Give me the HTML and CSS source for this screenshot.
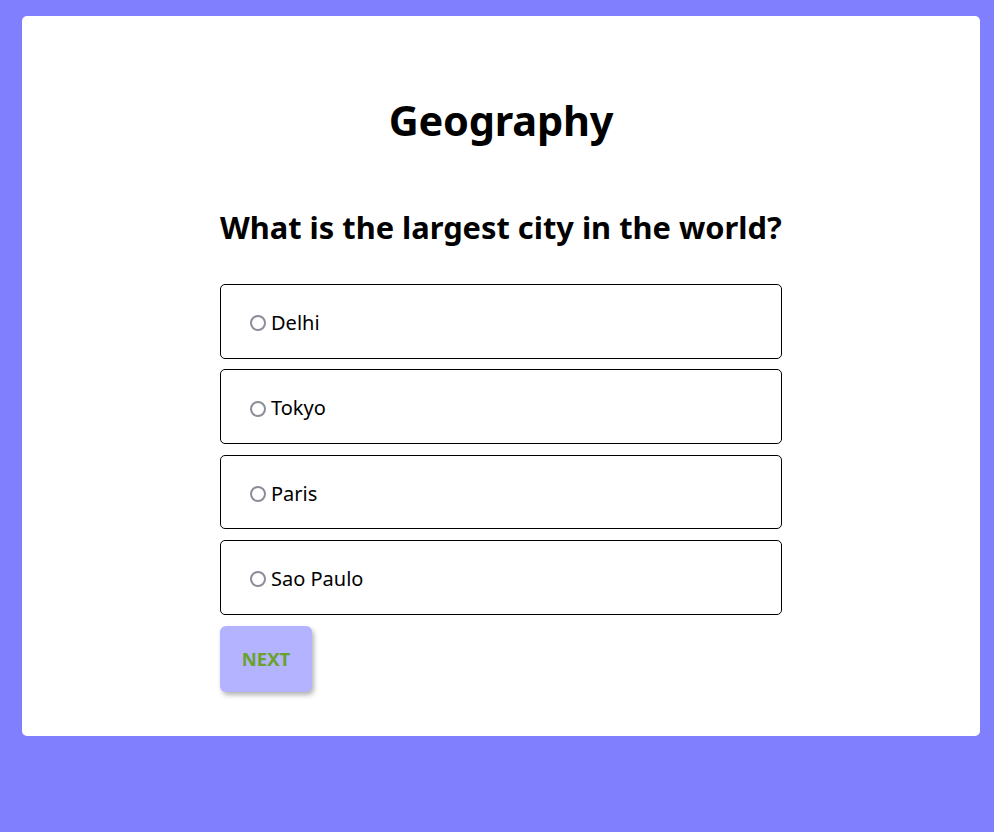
FILE: index.html
```html
<!DOCTYPE html>
<html>
<head>
<meta charset="utf-8">
<title>Quiz</title>
<link rel="stylesheet" href="styles.css">
</head>
<body>
<div class="card">
  <div class="quiz">
    <h1 class="title">Geography</h1>
    <h2 class="question">What is the largest city in the world?</h2>
    <div class="options">
      <label class="option"><input type="radio" name="answer"><span>Delhi</span></label>
      <label class="option"><input type="radio" name="answer"><span>Tokyo</span></label>
      <label class="option"><input type="radio" name="answer"><span>Paris</span></label>
      <label class="option"><input type="radio" name="answer"><span>Sao Paulo</span></label>
    </div>
    <button class="next">NEXT</button>
  </div>
</div>
</body>
</html>
```
FILE: styles.css
```css
html, body {
  margin: 0;
  padding: 0;
}
body {
  background: #8080ff;
  padding: 16px 14px 96px 22px;
  font-family: "Noto Sans", "Open Sans", sans-serif;
  color: #000;
}
.card {
  background: #fff;
  border-radius: 5px;
  height: 720px;
  box-sizing: border-box;
  padding-top: 79px;
}
.quiz {
  width: 562px;
  margin: 0 auto;
}
.title {
  text-align: center;
  font-size: 41.5px;
  font-weight: 700;
  line-height: 50px;
  margin: 0;
  letter-spacing: -0.2px;
}
.question {
  font-size: 30.8px;
  font-weight: 700;
  line-height: 40px;
  margin: 62px 0 0 0;
  white-space: nowrap;
}
.options {
  display: flex;
  flex-direction: column;
  gap: 10.67px;
  margin-top: 37px;
}
.option {
  display: flex;
  align-items: center;
  height: 74.7px;
  box-sizing: border-box;
  border: 1px solid #000;
  border-radius: 5px;
  padding: 2px 0 0 29px;
  font-size: 20px;
}
.option input {
  appearance: none;
  -webkit-appearance: none;
  width: 16px;
  height: 16px;
  box-sizing: border-box;
  border: 2px solid #8d8d99;
  border-radius: 50%;
  margin: 2px 5px 0 0;
  background: #fff;
}
.option input:checked {
  border-color: #0075ff;
  box-shadow: inset 0 0 0 2px #fff;
  background: #0075ff;
}
.next {
  margin-top: 11px;
  width: 92px;
  height: 66px;
  border: none;
  border-radius: 6px;
  background: #b3b3ff;
  color: #6aa22a;
  font-family: "Noto Sans", sans-serif;
  font-weight: 700;
  font-size: 18.5px;
  box-shadow: 2px 3px 5px rgba(0,0,0,0.3);
  padding: 0;
}
```
